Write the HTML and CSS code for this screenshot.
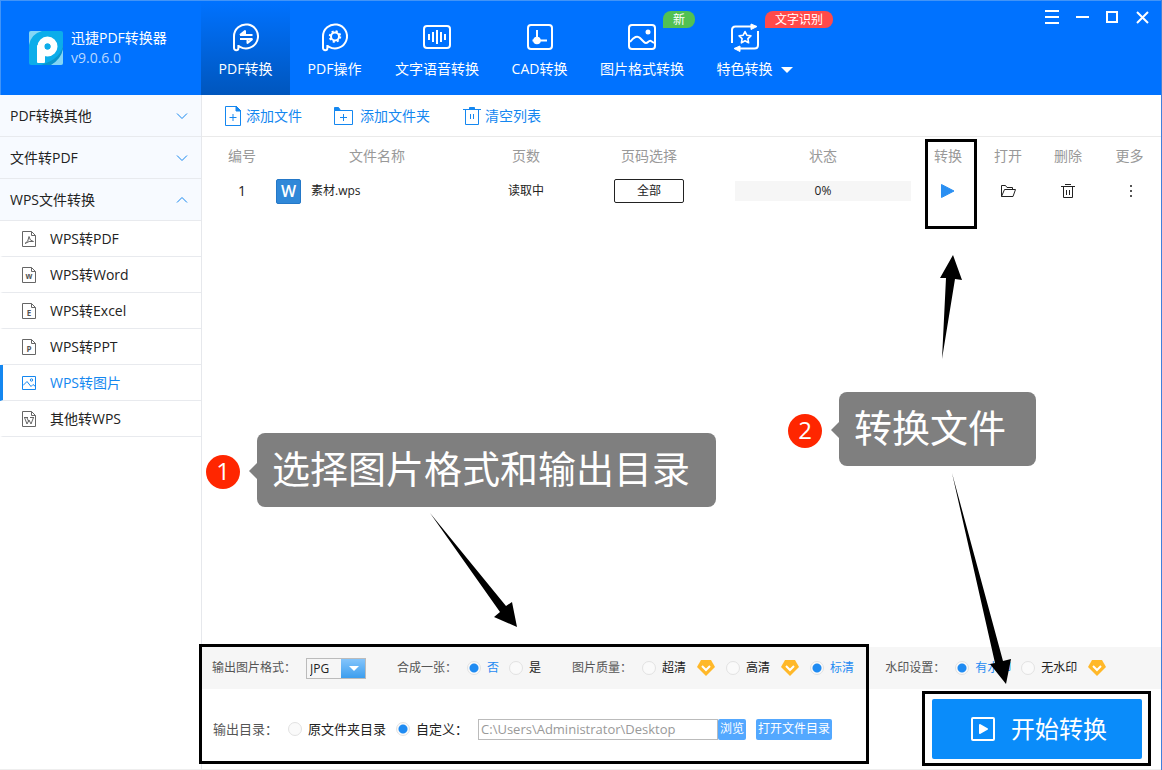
FILE: index.html
```html
<!DOCTYPE html>
<html lang="zh-CN">
<head>
<meta charset="utf-8">
<meta name="viewport" content="width=device-width, initial-scale=1">
<title>迅捷PDF转换器</title>
<link rel="stylesheet" href="styles.css">
</head>
<body>
<div class="app">
  <header class="header">
    <div class="brand">
      <svg class="brand-logo" viewBox="0 0 34 34" aria-hidden="true">
        <rect width="34" height="34" rx="2" fill="#0cadea"/>
        <path d="M0 14Q2 3 13 0H2Q0 0 0 2zM34 14Q34 28 17 34H32Q34 34 34 32z" fill="#84d6f5"/>
        <path d="M34 12Q34 27 12 34H22Q32 28 34 18z" fill="#0a95cc"/>
        <circle cx="18.500" cy="15.500" r="6.500" fill="none" stroke="#fff" stroke-width="7"/>
        <rect x="8" y="14" width="8" height="18" rx="1" fill="#fff"/>
        <circle cx="18.500" cy="15.500" r="3" fill="#0cadea"/>
      </svg>
      <div class="brand-text">
        <h1 class="brand-name">迅捷PDF转换器</h1>
        <span class="brand-version">v9.0.6.0</span>
      </div>
    </div>
    <nav class="tabs">
      <button class="tab tab-active" type="button">
        <svg class="tab-icon" viewBox="0 0 30 30"><path d="M3 26V14.500A12 12 0 1 1 9 24.800L7.500 24M3 26A2.200 2.200 0 0 0 7.400 26V23"/><path d="M9 13H21.500M9 13L14 9V13M21.500 17H9M21.500 17L16.500 21V17"/></svg>
        <span>PDF转换</span>
      </button>
      <button class="tab" type="button">
        <svg class="tab-icon" viewBox="0 0 30 30"><path d="M3 26V14.500A12 12 0 1 1 9 24.800L7.500 24M3 26A2.200 2.200 0 0 0 7.400 26V23"/><circle cx="15" cy="14.500" r="4"/><path stroke-dasharray="2.100 2.090" stroke-width="1.800" d="M20.330 14.500a5.330 5.330 0 1 1-10.660 0a5.330 5.330 0 1 1 10.660 0"/></svg>
        <span>PDF操作</span>
      </button>
      <button class="tab" type="button">
        <svg class="tab-icon" viewBox="0 0 30 30"><rect x="2" y="4" width="26" height="22" rx="3"/><path d="M7 12v6M11 10v10M15 8v14M19 10v10M23 12v6"/></svg>
        <span>文字语音转换</span>
      </button>
      <button class="tab" type="button">
        <svg class="tab-icon" viewBox="0 0 30 30"><rect x="3" y="3" width="24" height="24" rx="3"/><path d="M12 8v14M7.500 18.500H22"/><circle cx="12" cy="18.500" r="2.800" fill="#fff"/></svg>
        <span>CAD转换</span>
      </button>
      <button class="tab" type="button">
        <svg class="tab-icon" viewBox="0 0 30 30"><rect x="2" y="3" width="26" height="24" rx="3"/><path d="M3 20Q9 12 13 16L17 20Q19 22 21 20T24 19L27 21"/><circle cx="21" cy="10" r="2.500" fill="#fff" stroke="none"/></svg>
        <span>图片格式转换</span>
        <span class="badge badge-new">新</span>
      </button>
      <button class="tab" type="button">
        <svg class="tab-icon" viewBox="0 0 30 30"><path d="M2 21V8Q2 4.500 5.500 4.500H21M28 9V23Q28 26.500 24.500 26.500H10"/><path d="M21 2L27 4.500L21 7.500zM10 24L4 26.500L10 29.500z" fill="#fff" stroke-width="1"/><path stroke-width="1.600" d="M15 9.500l1.800 3.700 4.100.6-3 2.900.7 4.100-3.600-2-3.600 2 .7-4.100-3-2.900 4.100-.6z"/></svg>
        <span>特色转换</span>
        <span class="badge badge-ocr">文字识别</span>
      </button>
      <span class="tabs-more"></span>
    </nav>
    <div class="window-controls">
      <button type="button" aria-label="菜单"><svg viewBox="0 0 16 16"><path d="M1 2h14M1 8h14M1 14h14"/></svg></button>
      <button type="button" aria-label="最小化"><svg viewBox="0 0 16 16"><path d="M2 8h13"/></svg></button>
      <button type="button" aria-label="最大化"><svg viewBox="0 0 16 16"><path d="M3 3h10v10H3z"/></svg></button>
      <button type="button" aria-label="关闭"><svg viewBox="0 0 16 16"><path d="M3 3l11 11M14 3L3 14"/></svg></button>
    </div>
  </header>

  <div class="body">
    <aside class="sidebar">
      <button class="group" type="button">PDF转换其他<svg class="chevron" viewBox="0 0 12 8"><path d="M1 1.500l5 5 5-5"/></svg></button>
      <button class="group" type="button">文件转PDF<svg class="chevron" viewBox="0 0 12 8"><path d="M1 1.500l5 5 5-5"/></svg></button>
      <button class="group" type="button">WPS文件转换<svg class="chevron" viewBox="0 0 12 8"><path d="M1 6.500l5-5 5 5"/></svg></button>
      <a class="item" href="#pdf"><svg class="item-icon" viewBox="0 0 16 18"><path d="M1.500 1.500h9l4 4v11h-13zM10.500 1.500v4h4"/><path d="M4 13.500Q7.500 12 8 6.500Q8.500 11 12.500 11.500Q8 10.500 4 13.500z"/></svg>WPS转PDF</a>
      <a class="item" href="#word"><svg class="item-icon" viewBox="0 0 16 18"><path d="M1.500 1.500h9l4 4v11h-13zM10.500 1.500v4h4"/><text x="8" y="13" text-anchor="middle">w</text></svg>WPS转Word</a>
      <a class="item" href="#excel"><svg class="item-icon" viewBox="0 0 16 18"><path d="M1.500 1.500h9l4 4v11h-13zM10.500 1.500v4h4"/><text x="8" y="14" text-anchor="middle">E</text></svg>WPS转Excel</a>
      <a class="item" href="#ppt"><svg class="item-icon" viewBox="0 0 16 18"><path d="M1.500 1.500h9l4 4v11h-13zM10.500 1.500v4h4"/><text x="8" y="14" text-anchor="middle">P</text></svg>WPS转PPT</a>
      <a class="item item-active" href="#image"><svg class="item-icon" viewBox="0 0 16 18"><path d="M1.500 2.500h13v13h-13zM2 11.500l4-4 4 5 2-2 2.500 2"/><circle cx="10.500" cy="6" r="1.200"/></svg>WPS转图片</a>
      <a class="item" href="#other"><svg class="item-icon" viewBox="0 0 16 18"><path d="M1.500 1.500h9l4 4v11h-13zM10.500 1.500v4h4"/><path d="M3 7.500h4M3.500 7.500L6 14l2-4 2 4 2.500-6.500M9 7.500h4M6 8l2 4"/></svg>其他转WPS</a>
    </aside>

    <main class="main">
      <div class="toolbar">
        <button class="tool" type="button"><svg class="tool-icon" viewBox="0 0 20 22"><path d="M2.500 1.500h11l4 4v15h-15zM10 9v7M6.500 12.500h7"/><path d="M13 1l5 5h-5z" fill="#1487f0"/></svg>添加文件</button>
        <button class="tool tool-wide" type="button"><svg class="tool-icon" viewBox="0 0 20 22"><path d="M.5 5.500h18v14H.500zM9.500 9v7M6 12.500h7"/><path d="M.5 5.500v-3h4l2 3z" fill="#1487f0"/></svg>添加文件夹</button>
        <button class="tool" type="button"><svg class="tool-icon" viewBox="0 0 20 22"><path d="M1 4.500h18M3.500 4.500v15h13v-15M8.500 9v5M11.500 9v5"/><path d="M7.500 2.500h5v2h-5z" fill="#1487f0"/></svg>清空列表</button>
      </div>

      <table class="files">
        <colgroup><col class="c-no"><col><col class="c-pages"><col class="c-range"><col class="c-state"><col class="c-act"><col class="c-act"><col class="c-act"><col class="c-more"></colgroup>
        <thead>
          <tr><th class="no">编号</th><th>文件名称</th><th>页数</th><th>页码选择</th><th>状态</th><th>转换</th><th>打开</th><th>删除</th><th>更多</th></tr>
        </thead>
        <tbody>
          <tr>
            <td class="no">1</td>
            <td><div class="file"><span class="file-icon">W</span>素材.wps</div></td>
            <td>读取中</td>
            <td><button class="range" type="button">全部</button></td>
            <td><div class="progress">0%</div></td>
            <td><button class="act" type="button" aria-label="转换"><svg viewBox="0 0 16 16"><path d="M1.500 1.500L14 8 1.500 14.500z" fill="#2a8ff2" stroke="#2a8ff2" stroke-linejoin="round"/></svg></button></td>
            <td><button class="act" type="button" aria-label="打开"><svg viewBox="0 0 16 16"><path d="M1.500 13.500v-11h4l1.500 2h5.500v2M1.500 13.500l3-7h11l-2.500 7z"/></svg></button></td>
            <td><button class="act" type="button" aria-label="删除"><svg viewBox="0 0 16 16"><path d="M1 3.500h14M3.500 3.500v11h9v-11M5 1.500h6M6.500 7v5M9.500 7v5"/></svg></button></td>
            <td><button class="act" type="button" aria-label="更多"><svg viewBox="0 0 16 16"><path d="M8 2h2v2H8zM8 7h2v2H8zM8 12h2v2H8z" fill="#555" stroke="none"/></svg></button></td>
          </tr>
        </tbody>
      </table>

      <form class="settings">
        <div class="options">
          <div class="option">
            <label for="format">输出图片格式：</label>
            <span class="select-box"><select id="format" class="select"><option>JPG</option></select></span>
          </div>
          <fieldset class="option">
            <span>合成一张：</span>
            <label class="choice"><input type="radio" name="merge" checked><span>否</span></label>
            <label class="choice"><input type="radio" name="merge"><span>是</span></label>
          </fieldset>
          <fieldset class="option">
            <span>图片质量：</span>
            <label class="choice"><input type="radio" name="quality"><span>超清</span></label>
            <svg class="vip" viewBox="0 0 20 18"><path d="M5 1h10l4 7-9 9-9-9z" fill="#ffb829"/><path d="M6 7l4 4 4-4" fill="none" stroke="#fff" stroke-width="2"/></svg>
            <label class="choice"><input type="radio" name="quality"><span>高清</span></label>
            <svg class="vip" viewBox="0 0 20 18"><path d="M5 1h10l4 7-9 9-9-9z" fill="#ffb829"/><path d="M6 7l4 4 4-4" fill="none" stroke="#fff" stroke-width="2"/></svg>
            <label class="choice"><input type="radio" name="quality" checked><span>标清</span></label>
          </fieldset>
          <fieldset class="option">
            <span>水印设置：</span>
            <label class="choice"><input type="radio" name="mark" checked><span>有水印</span></label>
            <label class="choice"><input type="radio" name="mark"><span>无水印</span></label>
            <svg class="vip" viewBox="0 0 20 18"><path d="M5 1h10l4 7-9 9-9-9z" fill="#ffb829"/><path d="M6 7l4 4 4-4" fill="none" stroke="#fff" stroke-width="2"/></svg>
          </fieldset>
        </div>
        <div class="output">
          <span class="output-label">输出目录：</span>
          <label class="choice"><input type="radio" name="dir">原文件夹目录</label>
          <label class="choice"><input type="radio" name="dir" checked>自定义：</label>
          <div class="path-row">
            <input class="path" type="text" aria-label="自定义输出目录" value="C:\Users\Administrator\Desktop">
            <button class="small-btn" type="button">浏览</button>
          </div>
          <button class="small-btn" type="button">打开文件目录</button>
          <button class="start" type="button"><svg viewBox="0 0 24 24"><rect x="1" y="1" width="22" height="22" rx="1" fill="none" stroke="#fff" stroke-width="2"/><path d="M9 8l7 4-7 4z" fill="#fff" stroke="#fff" stroke-width="2" stroke-linejoin="round"/></svg>开始转换</button>
        </div>
      </form>
    </main>
  </div>

  <div class="guide">
    <div class="frame frame-convert"></div>
    <div class="frame frame-settings"></div>
    <div class="frame frame-start"></div>
    <svg class="arrows" width="1162" height="770" viewBox="0 0 1162 770">
      <path d="M430 513L506 606 512 602 517 627 494 617 500 612z"/>
      <path d="M942 359L946 278 940 278 953 255 962 280 955 279z"/>
      <path d="M952 473L1003 661 1011 659 1006 684 990 664 995 663z"/>
    </svg>
    <span class="step step-one">1</span>
    <div class="callout callout-one">选择图片格式和输出目录</div>
    <span class="step step-two">2</span>
    <div class="callout callout-two">转换文件</div>
  </div>
</div>
</body>
</html>
```
FILE: styles.css
```css
* { box-sizing: border-box; }

body {
  margin: 0;
  color: #222;
  background: #fff;
  font: 14px/20px "Open Sans", "Noto Sans CJK SC", sans-serif;
}

button, input, select { font: inherit; color: inherit; }

button {
  padding: 0;
  border: 0;
  background: none;
  cursor: pointer;
}

a { color: inherit; text-decoration: none; }

.app {
  position: relative;
  display: flex;
  flex-direction: column;
  min-height: 100vh;
  border-right: 1px solid #4080dc;
}

/* Header */
.header {
  display: flex;
  height: 95px;
  border-top: 1px solid #4294f7;
  border-left: 1px solid #4294f7;
  background: #0072ff;
  color: #fff;
}

.brand {
  display: flex;
  gap: 8px;
  align-items: center;
  width: 200px;
  padding-left: 28px;
}

.brand-logo { width: 34px; height: 34px; }
.brand-text { display: flex; flex-direction: column; }
.brand-name { margin: 0; font-size: 14px; font-weight: 400; }
.brand-version { color: #b8d8ff; }

.tabs { display: flex; }

.tab {
  position: relative;
  display: flex;
  flex-direction: column;
  gap: 7px;
  align-items: center;
  min-width: 89px;
  padding: 21px 16px 0;
  white-space: nowrap;
}

.tab-active { background: linear-gradient(#0072ff, #0056bd); }

.tab-icon {
  width: 30px;
  height: 30px;
  fill: none;
  stroke: #fff;
  stroke-width: 2;
  stroke-linejoin: round;
}

.tabs-more {
  align-self: flex-start;
  margin: 66px 0 0 -8px;
  border: 6px solid transparent;
  border-top-color: #fff;
  border-bottom: 0;
}

.badge {
  position: absolute;
  top: 10px;
  left: 79px;
  height: 17px;
  padding: 0 10px;
  border-radius: 8px 8px 8px 0;
  font-size: 12px;
  line-height: 17px;
}

.badge-new { background: #52c152; }
.badge-ocr { left: 65px; background: #ff4a4a; }

.window-controls {
  display: flex;
  align-items: flex-start;
  margin-left: auto;
  padding: 8px 4px 0 0;
}

.window-controls button { display: flex; justify-content: center; width: 30px; }

.window-controls svg {
  width: 16px;
  height: 16px;
  fill: none;
  stroke: #fff;
  stroke-width: 2;
}

/* Sidebar */
.body { display: flex; flex: 1; border-bottom: 1px solid #eee; }

.sidebar {
  flex: none;
  width: 202px;
  border-right: 1px solid #e6e8ec;
}

.group {
  display: flex;
  align-items: center;
  justify-content: space-between;
  width: 100%;
  height: 42px;
  padding: 0 13px 0 10px;
  border-bottom: 1px solid #e8eaee;
  background: #f7faff;
}

.chevron {
  width: 12px;
  height: 8px;
  fill: none;
  stroke: #1487f0;
}

.item {
  display: flex;
  gap: 13px;
  align-items: center;
  height: 36px;
  padding-left: 18px;
  border-bottom: 1px solid #e8eaee;
  box-shadow: none;
  border-left: 3px solid transparent;
}

.item-active { border-left-color: #1487f0; color: #1487f0; }

.item-icon {
  width: 16px;
  height: 18px;
  fill: none;
  stroke: #666;
}

.item-active .item-icon { stroke: #1487f0; }
.item-icon text { fill: #555; stroke: none; font-size: 8px; font-weight: 700; }

/* Main area */
.main { display: flex; flex: 1; flex-direction: column; min-width: 0; }

.toolbar {
  display: flex;
  gap: 32px;
  align-items: center;
  height: 42px;
  padding-left: 21px;
  border-bottom: 1px solid #eaeaea;
}

.tool { display: flex; gap: 3px; align-items: center; color: #1487f0; }
.tool-wide { gap: 6px; }

.tool-icon {
  width: 20px;
  height: 22px;
  fill: none;
  stroke: #1487f0;
}

.files {
  width: 100%;
  table-layout: fixed;
  border-collapse: collapse;
  font-size: 12px;
  text-align: center;
}

.c-no { width: 70px; }
.c-pages { width: 88px; }
.c-range { width: 158px; }
.c-state { width: 190px; }
.c-act { width: 60px; }
.c-more { width: 63px; }

.files th {
  height: 38px;
  padding: 0;
  color: #999;
  font-size: 14px;
  font-weight: 400;
}

.files td { height: 32px; padding: 0; }
.files .no { padding-left: 10px; font-size: 14px; }

.file { display: flex; gap: 10px; align-items: center; padding-left: 4px; }

.file-icon {
  width: 25px;
  height: 25px;
  border: 1px solid #2478c8;
  border-radius: 2px;
  background: #3088d8;
  color: #fff;
  font-size: 16px;
  font-weight: 600;
  line-height: 22px;
}

.range {
  width: 70px;
  height: 24px;
  border: 1px solid #222;
  border-radius: 2px;
}

.progress { margin: 0 7px; background: #f6f6f6; }
.act { display: block; width: 16px; height: 16px; margin: 0 auto; }
.act svg { display: block; fill: none; stroke: #222; }

/* Conversion settings */
.settings { margin-top: auto; }

.options {
  display: flex;
  gap: 31px;
  align-items: center;
  height: 42px;
  padding-left: 10px;
  background: #f6f6f6;
  font-size: 12px;
  white-space: nowrap;
}

.option {
  display: flex;
  gap: 10px;
  align-items: center;
  margin: 0;
  padding: 0;
  border: 0;
  color: #555;
}

.select-box { position: relative; display: flex; }

.select-box::after {
  position: absolute;
  top: 8px;
  right: 7px;
  border: 5px solid transparent;
  border-top-color: #fff;
  border-bottom: 0;
  content: "";
  pointer-events: none;
}

.select {
  width: 60px;
  height: 21px;
  padding: 0 0 0 3px;
  border: 1px solid #bbb;
  border-radius: 0;
  appearance: none;
  background: linear-gradient(#83c4fb, #3d9eee) right / 24px 100% no-repeat #f6f6f6;
  color: #222;
}

.choice { display: flex; gap: 6px; align-items: center; color: #222; }

.choice input {
  width: 14px;
  height: 14px;
  margin: 0;
  border: 1px solid #e2e2e2;
  border-radius: 50%;
  appearance: none;
  background: #fafafa;
}

.choice input:checked { background: radial-gradient(circle, #1f8bf2 4px, #fafafa 5px); }
.choice input:checked + span { color: #1f8bf2; }
.vip { width: 20px; height: 18px; }

.output {
  display: flex;
  gap: 10px;
  align-items: center;
  height: 80px;
  padding: 0 19px 0 11px;
  font-size: 13px;
  white-space: nowrap;
}

.output-label { color: #555; }
.path-row { display: flex; }

.path {
  width: 240px;
  height: 21px;
  padding: 0 2px;
  border: 1px solid #bbb;
  background: #fff;
  color: #999;
}

.small-btn {
  height: 21px;
  padding: 0 2px;
  border-radius: 2px;
  background: #53a8ff;
  color: #fff;
  font-size: 12px;
}

.start {
  display: flex;
  gap: 16px;
  align-items: center;
  justify-content: center;
  width: 210px;
  height: 60px;
  margin-left: auto;
  padding-left: 4px;
  border-radius: 2px;
  background: #0a8cfa;
  color: #fff;
  font-size: 24px;
}

.start svg { width: 24px; height: 24px; }

/* Tutorial annotations laid over the window */
.guide { position: absolute; inset: 0; overflow: hidden; pointer-events: none; }
.frame { position: absolute; border: 3px solid #000; }
.frame-convert { top: 139px; left: 925px; width: 52px; height: 90px; }
.frame-settings { top: 644px; left: 199px; width: 670px; height: 120px; }
.frame-start { top: 691px; left: 922px; width: 229px; height: 75px; }
.arrows { position: absolute; top: 0; left: 0; }

.step {
  position: absolute;
  width: 34px;
  height: 34px;
  border-radius: 50%;
  background: #ff2600;
  color: #fff;
  font-size: 24px;
  font-weight: 500;
  line-height: 32px;
  text-align: center;
}

.step-one { top: 455px; left: 206px; }
.step-two { top: 414px; left: 788px; }

.callout {
  position: absolute;
  height: 74px;
  padding-left: 15px;
  border-radius: 8px;
  background: #7f7f7f;
  color: #fff;
  font-size: 38px;
  line-height: 70px;
  white-space: nowrap;
}

.callout::before {
  position: absolute;
  top: 30px;
  left: -8px;
  border: 8px solid transparent;
  border-right-color: #7f7f7f;
  border-left: 0;
  content: "";
}

.callout-one { top: 433px; left: 257px; width: 459px; }
.callout-two { top: 392px; left: 839px; width: 197px; }
```
